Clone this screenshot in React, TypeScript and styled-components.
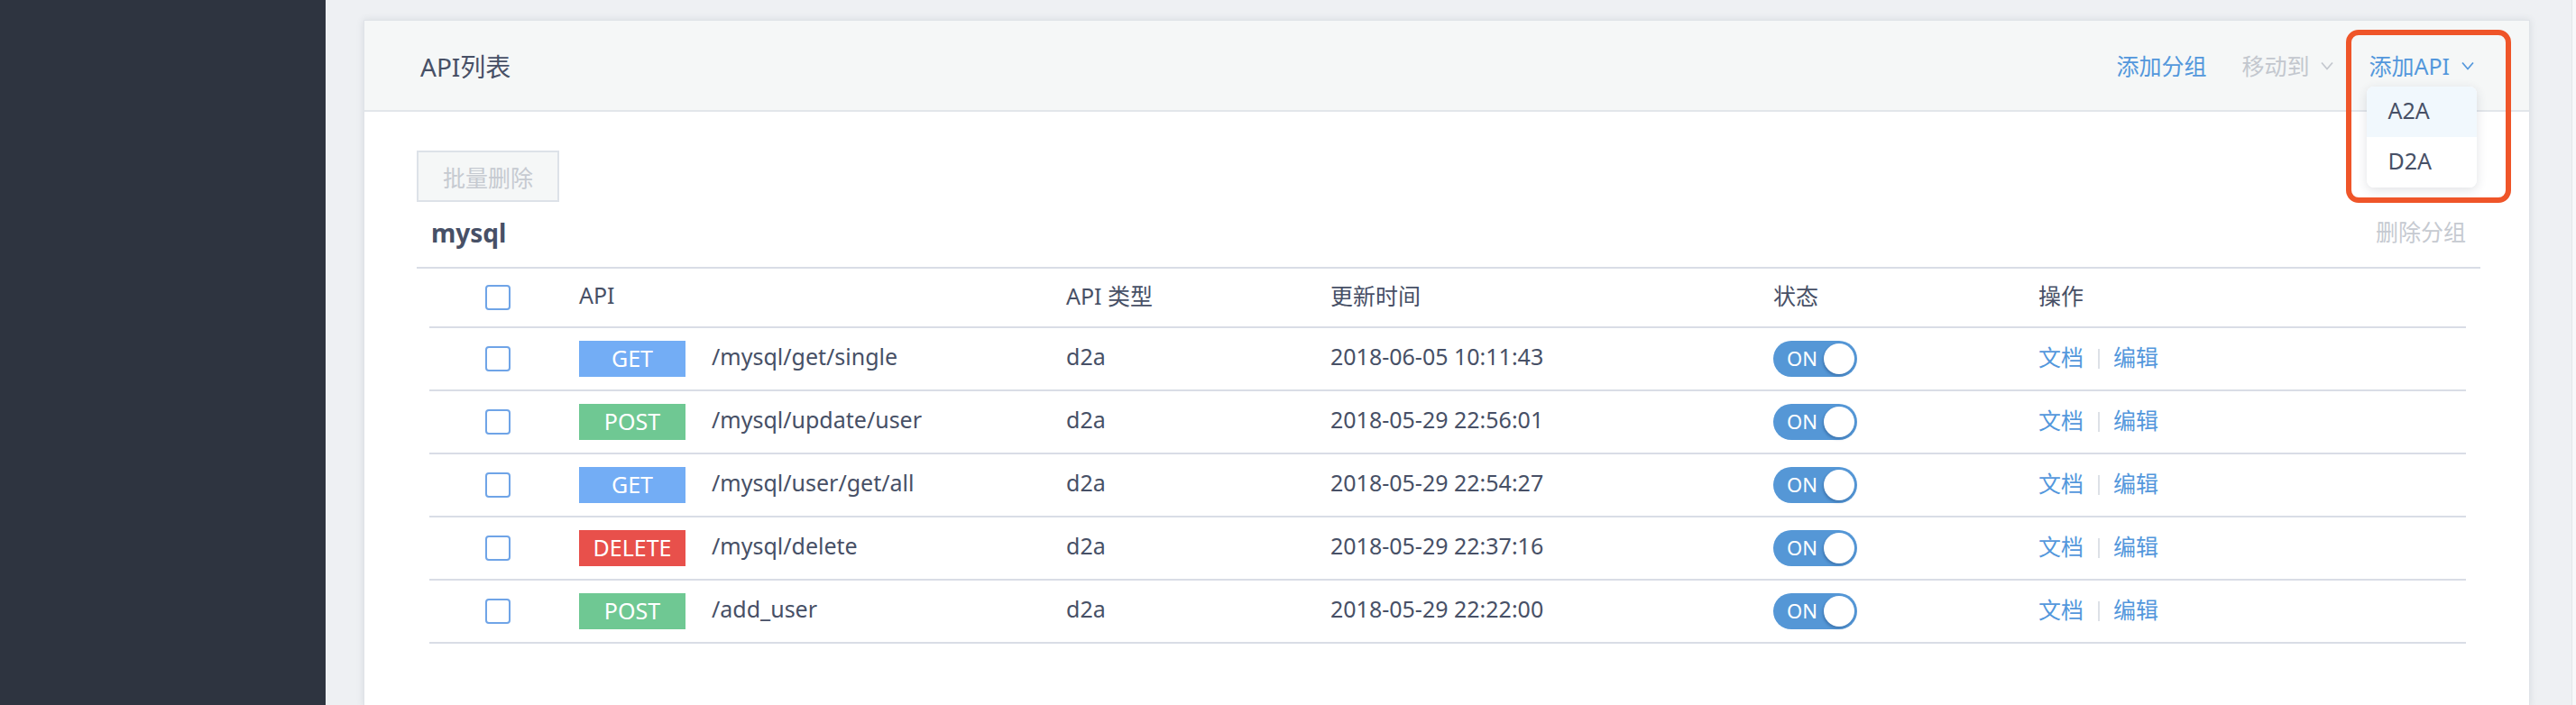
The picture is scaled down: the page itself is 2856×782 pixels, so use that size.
import styled, { createGlobalStyle } from "styled-components";

type Method = "GET" | "POST" | "DELETE";

interface ApiRow {
  method: Method;
  path: string;
  type: string;
  updated: string;
}

const rows: ApiRow[] = [
  { method: "GET", path: "/mysql/get/single", type: "d2a", updated: "2018-06-05 10:11:43" },
  { method: "POST", path: "/mysql/update/user", type: "d2a", updated: "2018-05-29 22:56:01" },
  { method: "GET", path: "/mysql/user/get/all", type: "d2a", updated: "2018-05-29 22:54:27" },
  { method: "DELETE", path: "/mysql/delete", type: "d2a", updated: "2018-05-29 22:37:16" },
  { method: "POST", path: "/add_user", type: "d2a", updated: "2018-05-29 22:22:00" },
];

const methodColors: Record<Method, string> = {
  GET: "#73adf5",
  POST: "#6fc893",
  DELETE: "#e8504b",
};

function Chevron() {
  return (
    <svg width="14" height="10" viewBox="0 0 14 10" fill="none">
      <polyline points="1,1.5 7,8.5 13,1.5" stroke="currentColor" strokeWidth="1.7" />
    </svg>
  );
}

export default function App() {
  return (
    <>
      <GlobalStyle />
      <Layout>
        <Sidebar />
        <Main>
          <Card>
            <CardHeader>
              <Title>API列表</Title>
              <HeaderActions>
                <HeaderLink>添加分组</HeaderLink>
                <HeaderLink disabled>
                  移动到
                  <Chevron />
                </HeaderLink>
                <DropdownWrap>
                  <HeaderLink>
                    添加API
                    <Chevron />
                  </HeaderLink>
                  <Menu>
                    <MenuItem active>A2A</MenuItem>
                    <MenuItem>D2A</MenuItem>
                  </Menu>
                  <Highlight />
                </DropdownWrap>
              </HeaderActions>
            </CardHeader>

            <CardBody>
              <BatchButton>批量删除</BatchButton>
              <Group>
                <GroupHeader>
                  <GroupName>mysql</GroupName>
                  <GroupDelete>删除分组</GroupDelete>
                </GroupHeader>
                <Table>
                  <HeadRow>
                    <Cell>
                      <Checkbox />
                    </Cell>
                    <Cell>
                      <Label>API</Label>
                    </Cell>
                    <Cell>
                      <Label>API 类型</Label>
                    </Cell>
                    <Cell>
                      <Label>更新时间</Label>
                    </Cell>
                    <Cell>
                      <Label>状态</Label>
                    </Cell>
                    <Cell>
                      <Label>操作</Label>
                    </Cell>
                  </HeadRow>
                  {rows.map((r) => (
                    <BodyRow key={r.path}>
                      <Cell>
                        <Checkbox />
                      </Cell>
                      <Cell>
                        <Badge method={r.method}>{r.method}</Badge>
                        <Path>{r.path}</Path>
                      </Cell>
                      <Cell>
                        <Label>{r.type}</Label>
                      </Cell>
                      <Cell>
                        <Label>{r.updated}</Label>
                      </Cell>
                      <Cell>
                        <Toggle>
                          <ToggleLabel>ON</ToggleLabel>
                          <Knob />
                        </Toggle>
                      </Cell>
                      <Cell>
                        <ActionLink>文档</ActionLink>
                        <Divider />
                        <ActionLink>编辑</ActionLink>
                      </Cell>
                    </BodyRow>
                  ))}
                </Table>
              </Group>
            </CardBody>
          </Card>
        </Main>
        <ScrollStrip />
      </Layout>
    </>
  );
}

const GlobalStyle = createGlobalStyle`
  html, body {
    margin: 0;
    padding: 0;
  }
  body {
    font-family: "Noto Sans", "Noto Sans CJK SC", sans-serif;
    color: #475066;
    background: #eef0f3;
  }
`;

const Layout = styled.div`
  display: flex;
  height: 782px;
  overflow: hidden;
`;

const Sidebar = styled.aside`
  width: 361px;
  flex-shrink: 0;
  background: #2e3440;
`;

const Main = styled.main`
  flex: 1;
  padding: 22px 46px 0 42px;
  background: #eef0f3;
`;

const ScrollStrip = styled.div`
  width: 4px;
  flex-shrink: 0;
  background: #f7f8fa;
  border-left: 1px solid #e3e6ea;
`;

const Card = styled.section`
  height: 100%;
  background: #fff;
  border: 1px solid #dfe3e8;
  border-bottom: none;
  box-shadow: 0 0 8px rgba(60, 70, 90, 0.12);
`;

const CardHeader = styled.header`
  height: 99px;
  display: flex;
  align-items: center;
  justify-content: space-between;
  padding: 0 61px 0 62px;
  background: #f5f7f7;
  border-bottom: 2px solid #e2e6ea;
`;

const Title = styled.h2`
  margin: 0;
  font-size: 28px;
  font-weight: 400;
  color: #475066;
`;

const HeaderActions = styled.div`
  display: flex;
  align-items: center;
  gap: 39px;
`;

const HeaderLink = styled.span<{ disabled?: boolean }>`
  display: inline-flex;
  align-items: center;
  gap: 13px;
  height: 30px;
  font-size: 25px;
  line-height: 30px;
  color: ${(p) => (p.disabled ? "#c3c7ce" : "#5397dc")};
  cursor: pointer;
`;

const DropdownWrap = styled.div`
  position: relative;
`;

const Menu = styled.ul`
  position: absolute;
  top: calc(100% + 8px);
  left: -2px;
  width: 122px;
  margin: 0;
  padding: 0;
  list-style: none;
  background: #fff;
  border-radius: 8px;
  overflow: hidden;
  box-shadow: 0 3px 12px rgba(40, 50, 70, 0.14);
  z-index: 2;
`;

const MenuItem = styled.li<{ active?: boolean }>`
  height: 56px;
  display: flex;
  align-items: center;
  padding: 0 0 4px 23px;
  box-sizing: border-box;
  font-size: 25px;
  color: #475066;
  background: ${(p) => (p.active ? "#f1f8fd" : "#fff")};
`;

const Highlight = styled.div`
  position: absolute;
  left: -25px;
  top: -25px;
  width: 183px;
  height: 192px;
  box-sizing: border-box;
  border: 6px solid #ef5529;
  border-radius: 14px;
  pointer-events: none;
  z-index: 3;
`;

const CardBody = styled.div`
  padding: 43px 54px 0 58px;
`;

const BatchButton = styled.button`
  width: 158px;
  height: 57px;
  padding: 0;
  font-family: inherit;
  font-size: 25px;
  color: #c6cad1;
  background: #f5f7f7;
  border: 2px solid #dde2e8;
  border-radius: 0;
`;

const Group = styled.div`
  display: flex;
  flex-direction: column;
`;

const GroupHeader = styled.div`
  height: 72px;
  display: flex;
  align-items: center;
  justify-content: space-between;
  padding: 0 16px;
  border-bottom: 2px solid #d9dde6;
`;

const GroupName = styled.h3`
  margin: 0 0 4px;
  font-size: 28px;
  font-weight: 700;
  color: #475066;
`;

const GroupDelete = styled.span`
  font-size: 25px;
  color: #c6cad1;
  margin-bottom: 8px;
`;

const Table = styled.div`
  margin: 0 16px 0 14px;
`;

const columns = "166px 540px 293px 491px 294px 1fr";

const HeadRow = styled.div`
  display: grid;
  grid-template-columns: ${columns};
  align-items: center;
  height: 64px;
  font-size: 25px;
  color: #475066;
  border-bottom: 2px solid #d9dde6;
`;

const BodyRow = styled(HeadRow)`
  height: 68px;
`;

const Cell = styled.div`
  display: flex;
  align-items: center;
  white-space: nowrap;
`;

// Noto Sans sits low in its line box; lift text to the visual centre
const Label = styled.span`
  padding-bottom: 6px;
`;

const Checkbox = styled.span`
  width: 28px;
  height: 28px;
  box-sizing: border-box;
  margin-left: 62px;
  border: 2px solid #6fa4e7;
  border-radius: 4px;
  background: #fff;
`;

const Badge = styled.span<{ method: Method }>`
  width: 118px;
  height: 40px;
  display: inline-flex;
  align-items: center;
  justify-content: center;
  padding-bottom: 2px;
  box-sizing: border-box;
  font-size: 25px;
  color: #fff;
  background: ${(p) => methodColors[p.method]};
`;

const Path = styled(Label)`
  margin-left: 29px;
`;

const Toggle = styled.span`
  width: 93px;
  height: 40px;
  box-sizing: border-box;
  display: flex;
  align-items: center;
  justify-content: space-between;
  padding: 0 3px 0 15px;
  border-radius: 20px;
  background: #5597d6;
`;

const ToggleLabel = styled.span`
  font-size: 22px;
  color: #fff;
  padding-bottom: 2px;
`;

const Knob = styled.span`
  width: 34px;
  height: 34px;
  border-radius: 50%;
  background: #fff;
  box-shadow: -1px 2px 3px rgba(20, 60, 110, 0.35);
`;

const ActionLink = styled(Label)`
  color: #5397dc;
  cursor: pointer;
`;

const Divider = styled.span`
  width: 2px;
  height: 22px;
  margin: 0 15px 0 16px;
  background: #dde1e7;
`;
